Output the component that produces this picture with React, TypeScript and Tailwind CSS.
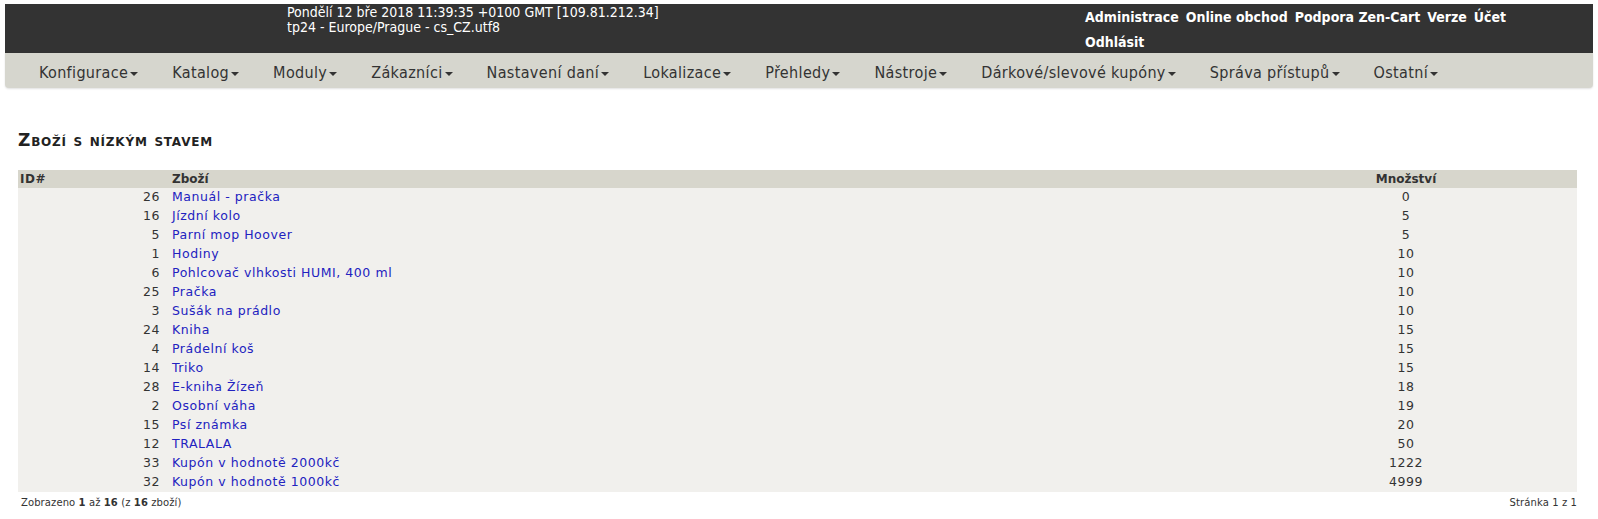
import React from "react";

type Row = { id: number; name: string; qty: number };

const ROWS: Row[] = [
  { id: 26, name: "Manuál - pračka", qty: 0 },
  { id: 16, name: "Jízdní kolo", qty: 5 },
  { id: 5, name: "Parní mop Hoover", qty: 5 },
  { id: 1, name: "Hodiny", qty: 10 },
  { id: 6, name: "Pohlcovač vlhkosti HUMI, 400 ml", qty: 10 },
  { id: 25, name: "Pračka", qty: 10 },
  { id: 3, name: "Sušák na prádlo", qty: 10 },
  { id: 24, name: "Kniha", qty: 15 },
  { id: 4, name: "Prádelní koš", qty: 15 },
  { id: 14, name: "Triko", qty: 15 },
  { id: 28, name: "E-kniha Žízeň", qty: 18 },
  { id: 2, name: "Osobní váha", qty: 19 },
  { id: 15, name: "Psí známka", qty: 20 },
  { id: 12, name: "TRALALA", qty: 50 },
  { id: 33, name: "Kupón v hodnotě 2000kč", qty: 1222 },
  { id: 32, name: "Kupón v hodnotě 1000kč", qty: 4999 },
];

const MENU = [
  "Konfigurace",
  "Katalog",
  "Moduly",
  "Zákazníci",
  "Nastavení daní",
  "Lokalizace",
  "Přehledy",
  "Nástroje",
  "Dárkové/slevové kupóny",
  "Správa přístupů",
  "Ostatní",
];

const LINKS = ["Administrace", "Online obchod", "Podpora Zen-Cart", "Verze", "Účet", "Odhlásit"];

export default function App() {
  return (
    <div className="min-h-[519px] bg-white text-[#333] font-['Verdana','DejaVu_Sans',sans-serif]">
      {/* top bar */}
      <div className="px-[5px] pt-[4px]">
        <div className="flex h-[49px] bg-[#333333] font-['DejaVu_Sans_Condensed','Liberation_Sans',sans-serif]">
          <div className="w-[282px] shrink-0" />
          <div className="w-[798px] shrink-0 pt-[1px] text-[14px] leading-[14px] text-white">
            <div>Pondělí 12 bře 2018 11:39:35 +0100 GMT [109.81.212.34]</div>
            <div className="pt-[1px]">tp24 - Europe/Prague - cs_CZ.utf8</div>
          </div>
          <div className="flex w-[460px] flex-wrap content-start gap-x-[7px] pt-[1px] text-[14px] font-bold leading-[25px] text-white">
            {LINKS.map((l) => (
              <a key={l} className="whitespace-nowrap">
                {l}
              </a>
            ))}
          </div>
        </div>

        {/* menu */}
        <div className="flex h-[35px] items-center rounded-b-[4px] bg-[#d6d6ce] pl-[17px] pt-[5px] shadow-[0_1px_2px_rgba(0,0,0,0.12)] font-['DejaVu_Sans_Condensed','Liberation_Sans',sans-serif] text-[16px] tracking-[0.35px] text-[#333]">
          {MENU.map((m) => (
            <a key={m} className="flex items-center whitespace-nowrap px-[17px]">
              {m}
              <span className="ml-[2px] mt-[2px] inline-block h-0 w-0 border-x-[4px] border-t-[4px] border-x-transparent border-t-[#333]" />
            </a>
          ))}
        </div>
      </div>

      {/* content */}
      <div className="px-[18px] pt-[42px]">
        <h1 className="text-[17px] font-bold leading-[20px] tracking-[0.8px] [font-variant:small-caps] text-[#222]">
          Zboží s nízkým stavem
        </h1>

        <div className="mt-[20px] mr-[3px]">
          <div className="grid h-[18px] grid-cols-[146px_1fr_342px] items-center bg-[#d7d6cc] text-[12px] font-bold">
            <div className="pl-[2px] tracking-[0.5px]">ID#</div>
            <div className="pl-[8px]">Zboží</div>
            <div className="text-center">Množství</div>
          </div>
          {ROWS.map((r) => (
            <div
              key={r.id}
              className="grid h-[19px] grid-cols-[146px_1fr_342px] items-center bg-[#f1f0ed] text-[12.5px] tracking-[0.55px]"
            >
              <div className="pr-[4px] text-right">{r.id}</div>
              <div className="pl-[8px]">
                <a className="text-[#2222c0]">{r.name}</a>
              </div>
              <div className="text-center">{r.qty}</div>
            </div>
          ))}

          <div className="flex justify-between pt-[4px] text-[10px] leading-[14px] tracking-[0.1px]">
            <div className="pl-[3px]">
              Zobrazeno <b>1</b> až <b>16</b> (z <b>16</b> zboží)
            </div>
            <div>Stránka 1 z 1</div>
          </div>
        </div>
      </div>
    </div>
  );
}
